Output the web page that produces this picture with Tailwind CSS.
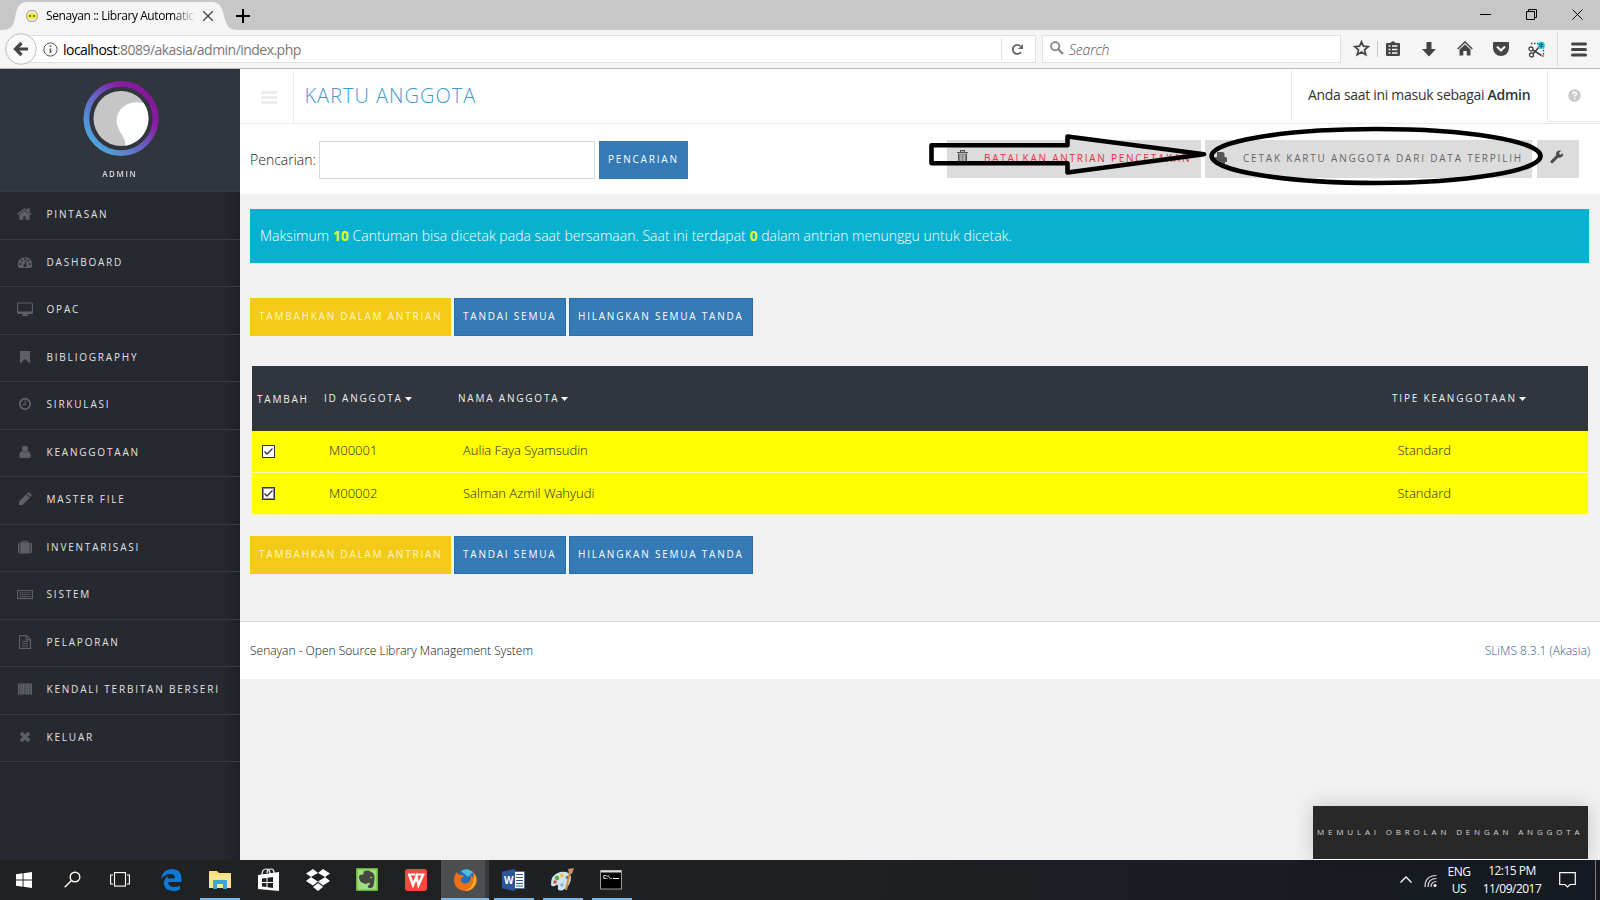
<!DOCTYPE html>
<html lang="id">
<head>
<meta charset="utf-8">
<title>Senayan :: Library Automation</title>
<script src="https://cdn.jsdelivr.net/npm/@tailwindcss/browser@4"></script>
</head>
<body class="w-[1600px] h-[900px] overflow-hidden relative flex flex-col bg-[#f1f1f1] font-['Open_Sans',sans-serif]">

<!-- Tab strip -->
<div class="h-[30px] shrink-0 bg-[#c7c7c7] flex relative">
  <svg class="absolute left-0 top-0" width="240" height="30"><path d="M0 30C11 30 13 27 15 18C17 7 19 2 28 2H211C220 2 222 7 224 16C227 27 229 30 238 30Z" fill="#f5f5f5"/></svg>
  <div class="relative flex items-center w-full">
    <svg class="ml-[26px] mt-[2px]" width="12" height="12" viewBox="0 0 12 12"><rect x=".5" y=".5" width="11" height="11" rx="4.500" fill="#e8e6d8" stroke="#a9a7b5"/><rect x="1" y="3.500" width="10" height="5" rx="2" fill="#f5ee20"/><circle cx="4" cy="6" r="1" fill="#554"/><circle cx="8" cy="6" r="1" fill="#554"/></svg>
    <span class="ml-[8px] mt-[2px] w-[150px] overflow-hidden whitespace-nowrap text-[12px] tracking-[-0.42px] bg-linear-to-r from-black from-84% to-transparent bg-clip-text text-transparent">Senayan :: Library Automatic</span>
    <svg class="ml-[7px] mt-[2px]" width="10" height="10" viewBox="0 0 10 10" stroke="#444" stroke-width="1.300"><path d="M0 0L10 10M10 0L0 10"/></svg>
    <svg class="ml-[23px] mt-[2px]" width="14" height="14" viewBox="0 0 14 14" stroke="#000" stroke-width="2"><path d="M7 0V14M0 7H14"/></svg>
    <svg class="ml-auto" width="11" height="11" viewBox="0 0 11 11" stroke="#000"><path d="M0 4.500H11"/></svg>
    <svg class="ml-[35px] -mt-[2px]" width="11" height="11" viewBox="0 0 11 11" fill="none" stroke="#000"><path d="M.5 2.500H8.500V10.500H.5ZM2.500 2.500V.5H10.500V8.500H8.500"/></svg>
    <svg class="ml-[35px] mr-[17px] -mt-[2px]" width="11" height="11" viewBox="0 0 11 11" stroke="#000"><path d="M.5 .5L10.500 10.500M10.500 .5L.5 10.500"/></svg>
  </div>
</div>

<!-- Address bar -->
<div class="h-[39px] shrink-0 bg-[#f5f5f5] border-b border-[#b9b9b9] flex items-center relative">
  <div class="ml-[21px] w-[1015px] h-[28px] bg-white border border-[#e0e0e0] flex items-center">
    <svg class="ml-[21px]" width="15" height="15" viewBox="0 0 15 15" fill="none" stroke="#555"><circle cx="7.500" cy="7.500" r="6.600"/><path d="M7.500 6.500V11M7.500 3.500V5" stroke-width="1.700"/></svg>
    <span class="ml-[5px] mt-[1px] text-[14px] text-black tracking-[-0.53px] whitespace-nowrap">localhost<span class="text-[#777]">:8089/akasia/admin/index.php</span></span>
    <div class="ml-auto w-[34px] h-[22px] border-l border-[#e0e0e0] flex items-center pl-[9px]">
      <svg width="13" height="13" viewBox="0 0 13 13"><path d="M10 9A4.500 4.500 0 1 1 9.500 3.200" fill="none" stroke="#666" stroke-width="1.900"/><path d="M7 6H12V1Z" fill="#666"/></svg>
    </div>
  </div>
  <svg class="absolute left-[5px] top-[3px]" width="32" height="32" viewBox="0 0 32 32"><circle cx="16" cy="16" r="15.300" fill="#f9f9f9" stroke="#bdbdbd"/><path d="M16.500 10L10.500 16L16.500 22M11 16H23" fill="none" stroke="#444" stroke-width="3.200"/></svg>
  <div class="ml-[6px] w-[299px] h-[28px] bg-white border border-[#e0e0e0] flex items-center">
    <svg class="ml-[7px] -mt-[2px]" width="14" height="14" viewBox="0 0 14 14" fill="none" stroke="#8a8a8a"><circle cx="5.200" cy="5.200" r="4.100" stroke-width="1.900"/><path d="M8.200 8.200L13 13" stroke-width="2.400"/></svg>
    <span class="ml-[5px] mt-[1px] text-[14px] italic font-light text-[#555] tracking-[-0.15px]">Search</span>
  </div>
  <svg class="ml-[12px] -mt-[2px]" width="17" height="17" viewBox="0 0 17 17"><path d="M8.500 1.800L10.400 6.200L15.200 6.600L11.500 9.800L12.700 14.600L8.500 12L4.300 14.600L5.500 9.800L1.800 6.600L6.600 6.200Z" fill="none" stroke="#444" stroke-width="1.700"/></svg>
  <div class="ml-[7px] w-px h-[16px] bg-[#c6c6c6]"></div>
  <svg class="ml-[8px] -mt-[2px]" width="14" height="15" viewBox="0 0 14 15"><path d="M0 3Q0 2 1 2H4L7 0L10 2H13Q14 2 14 3V13.500Q14 15 12.500 15H1.500Q0 15 0 13.500Z" fill="#444"/><path d="M2.500 5H4.500M2.500 8.500H4.500M2.500 12H4.500M6 5H11.500M6 8.500H11.500M6 12H11.500" stroke="#f5f5f5" stroke-width="1.700"/></svg>
  <svg class="ml-[22px]" width="14" height="15" viewBox="0 0 14 15"><path d="M4.500 0H9.500V7H14L7 14.500L0 7H4.500Z" fill="#444"/></svg>
  <svg class="ml-[21px] -mt-[1px]" width="16" height="15" viewBox="0 0 16 15"><path d="M.7 8L8 1L15.300 8" fill="none" stroke="#444" stroke-width="1.500"/><path d="M2.500 8.500L8 3.500L13.500 8.500V14.500H9.700V10H6.300V14.500H2.500Z" fill="#444"/></svg>
  <svg class="ml-[20px] -mt-[1px]" width="16" height="14" viewBox="0 0 16 14"><path d="M1 0H15Q16 0 16 1V6A8 8 0 0 1 0 6V1Q0 0 1 0Z" fill="#444"/><path d="M4 4.500L8 8.500L12 4.500" fill="none" stroke="#f5f5f5" stroke-width="2.200"/></svg>
  <svg class="ml-[19px]" width="18" height="17" viewBox="0 0 18 17" fill="none"><path d="M3 2.500H12M15.500 6V15H14" stroke="#444" stroke-width="1.300" stroke-dasharray="1.500 1.500"/><circle cx="3" cy="8" r="2" stroke="#444" stroke-width="1.300"/><circle cx="3.500" cy="14" r="2" stroke="#444" stroke-width="1.300"/><path d="M5 9L13.500 14.500M5 13L11 6" stroke="#444" stroke-width="1.600"/><circle cx="13.300" cy="4.300" r="3.600" fill="#12dbe6"/><path d="M13.300 1.800V6.800M11.100 3L15.500 5.600M15.500 3L11.100 5.600" stroke="#065a78" stroke-width="1.100"/></svg>
  <div class="ml-[11px] w-px h-[34px] bg-[#dadada]"></div>
  <svg class="ml-[13px]" width="16" height="15" viewBox="0 0 16 15" stroke="#444" stroke-width="3" stroke-linecap="round"><path d="M1.500 2H14.500M1.500 7.500H14.500M1.500 13H14.500"/></svg>
</div>

<!-- Page -->
<div class="h-[791px] shrink-0 flex">
  <aside class="w-[240px] shrink-0 bg-[#262930] bg-linear-to-l from-[#1f2128] to-[#262930] to-8% flex flex-col">
    <div class="h-[123px] shrink-0 bg-[#31353e] border-b border-[#363a43] flex flex-col items-center">
      <svg class="mt-[12px] ml-px" width="76" height="76" viewBox="0 0 76 76">
        <defs><linearGradient id="ring" x1="0.1" y1="0.85" x2="0.85" y2="0.15"><stop offset="0" stop-color="#4da5dc"/><stop offset=".5" stop-color="#6a5cc0"/><stop offset=".8" stop-color="#8a1fa5"/><stop offset="1" stop-color="#86179f"/></linearGradient><clipPath id="face"><circle cx="38" cy="37.500" r="27.500"/></clipPath></defs>
        <circle cx="38" cy="37.500" r="34.600" fill="none" stroke="url(#ring)" stroke-width="5.800"/>
        <g clip-path="url(#face)"><rect width="76" height="76" fill="#c6c6c6"/><path d="M70 28C58 16 37 21 34 36C32 45 38 51 40 56Q43 59 42 66H70Z" fill="#fff"/></g>
      </svg>
      <div class="mt-[10px] text-[9px] leading-[14px] font-semibold tracking-[1.8px] text-[#dcdcdc] origin-center scale-x-[0.89]">ADMIN</div>
    </div>
    <nav class="flex flex-col text-[10px] tracking-[1.8px] text-[#e2e2e2] [&>div]:h-[47.500px] [&>div]:border-b [&>div]:border-[#363a43] [&>div]:flex [&>div]:items-center [&>div]:pb-[1px] [&_svg]:w-[16px] [&_svg]:h-[16px] [&_svg]:ml-[17px] [&_svg]:mr-[13.5px] [&_svg]:mt-[-1px]">
      <div><svg viewBox="0 0 1792 1792" fill="#5d6067"><path d="M1408 992v480q0 26-19 45t-45 19h-384v-384h-256v384h-384q-26 0-45-19t-19-45v-480q0-1 .5-3t.5-3l575-474 575 474q1 2 1 6zm223-69l-62 74q-8 9-21 11h-3q-13 0-21-7l-692-577-692 577q-12 8-24 7-13-2-21-11l-62-74q-8-10-7-23.500t11-21.500l719-599q32-26 76-26t76 26l244 204v-195q0-14 9-23t23-9h192q14 0 23 9t9 23v408l219 182q10 8 11 21.500t-7 23.500z"/></svg>PINTASAN</div>
      <div><svg viewBox="0 0 16 16" fill="#5d6067"><path d="M1.800 14A7.200 7.200 0 1 1 14.200 14Z"/><g fill="#262930"><circle cx="3.300" cy="10" r="1"/><circle cx="4.800" cy="6.500" r="1"/><circle cx="8" cy="5" r="1"/><circle cx="11.300" cy="6.500" r="1"/><circle cx="12.700" cy="10" r="1"/><circle cx="8" cy="11.500" r="1.600"/><path d="M7.600 11L8.800 6.500L9.600 6.700L8.800 11.500Z"/></g></svg>DASHBOARD</div>
      <div><svg viewBox="0 0 16 16" fill="none" stroke="#5d6067"><rect x=".6" y="2" width="14.800" height="10.500" rx=".8" stroke-width="1.200"/><path d="M1 11.500H15" stroke-width="2"/><path d="M5 14.200H11M6.500 13H9.500" stroke-width="1.400"/></svg>OPAC</div>
      <div><svg viewBox="0 0 16 16" fill="#5d6067"><path d="M3 2H13V14.500L8 10L3 14.500Z"/></svg>BIBLIOGRAPHY</div>
      <div><svg viewBox="0 0 16 16" fill="none" stroke="#5d6067"><circle cx="8" cy="8" r="5.200" stroke-width="1.900"/><path d="M8.300 4.800V8.700H5.500" stroke-width="1.200"/></svg>SIRKULASI</div>
      <div><svg viewBox="0 0 16 16" fill="#5d6067"><circle cx="8" cy="4.800" r="3.100"/><path d="M4.800 7Q8 9.800 11.200 7Q13.700 8 13.700 12Q13.700 14 12 14H4Q2.300 14 2.300 12Q2.300 8 4.800 7Z"/></svg>KEANGGOTAAN</div>
      <div><svg viewBox="0 0 16 16" fill="#5d6067"><path d="M2 14V10.500L9.300 3.200L12.800 6.700L5.500 14ZM10 2.500L11.200 1.500Q12 1 12.700 1.700L14.200 3.200Q15 4 14.400 4.800L13.500 6Z"/></svg>MASTER FILE</div>
      <div><svg viewBox="0 0 16 16" fill="#5d6067"><path d="M1 5Q1 3.500 2.500 3.500V14.500Q1 14.500 1 13ZM3.300 3.500H5V2.500Q5 1.800 6 1.800H10Q11 1.800 11 2.500V3.500H12.700V14.500H3.300ZM6 3.500H10V2.800H6ZM13.500 3.500Q15 3.500 15 5V13Q15 14.500 13.500 14.500Z"/></svg>INVENTARISASI</div>
      <div><svg viewBox="0 0 16 16" fill="none" stroke="#5d6067"><rect x=".6" y="4.600" width="14.800" height="8" stroke-width="1.100"/><path d="M2.500 6.800H13.500M2.500 8.700H13.500" stroke-dasharray="1.500 .5"/><path d="M2.500 10.700H4M4.500 10.700H11.500M12 10.700H13.500"/></svg>SISTEM</div>
      <div><svg viewBox="0 0 16 16" fill="none" stroke="#5d6067"><path d="M2.500 1.600H9.500L13.500 5.600V14.400H2.500ZM9.300 1.600V5.800H13.500" stroke-width="1.200"/><path d="M5 7.500H11M5 9.700H11M5 11.900H11"/></svg>PELAPORAN</div>
      <div><svg viewBox="0 0 16 16" fill="#5d6067"><path d="M1 2.500H15V13.500H1Z" fill="#43464d"/><path d="M1 2.500H2.300V13.500H1ZM3 2.500H3.500V13.500H3ZM4.200 2.500H5.200V13.500H4.200ZM5.700 2.500H7V13.500H5.700ZM7.600 2.500H8.300V13.500H7.600ZM9 2.500H10.500V13.500H9ZM11 2.500H12V13.500H11ZM12.600 2.500H13.200V13.500H12.600ZM13.800 2.500H15V13.500H13.800Z"/></svg>KENDALI TERBITAN BERSERI</div>
      <div><svg viewBox="0 0 16 16" fill="none" stroke="#5d6067" stroke-width="3.600"><path d="M4 4L12 12M12 4L4 12"/></svg>KELUAR</div>
    </nav>
  </aside>

  <main class="flex-1 flex flex-col">
    <header class="h-[55px] shrink-0 bg-white border-b border-[#ececec] flex">
      <div class="w-[54px] mt-[3px] border-r border-[#ececec] flex pl-[21px] pt-[19px]">
        <svg width="16" height="13" viewBox="0 0 16 13" fill="#ededed"><path d="M0 0H16V3H0ZM0 5H16V8H0ZM0 10H16V13H0Z"/></svg>
      </div>
      <h1 class="ml-[10.5px] mt-[13px] text-[20px] leading-[28px] font-light tracking-[1px] text-[#3c9bcb]">KARTU ANGGOTA</h1>
      <div class="ml-auto w-[257px] h-[52px] border-x border-[#ececec] pl-[16px] pt-[15px] text-[14px] leading-[22px] text-[#333] whitespace-nowrap tracking-[-0.3px]">Anda saat ini masuk sebagai <b class="font-semibold">Admin</b></div>
      <div class="w-[52px] h-[53px] border-b border-[#ececec] flex items-center justify-center">
        <svg width="13" height="13" viewBox="0 0 13 13"><circle cx="6.500" cy="6.500" r="6.300" fill="#cacaca"/><path d="M4.500 5Q4.700 3.200 6.500 3.200Q8.500 3.200 8.500 5Q8.500 6.200 6.600 6.700V7.800M6.600 8.800V10.200" fill="none" stroke="#fff" stroke-width="1.500"/></svg>
      </div>
    </header>

    <section class="h-[70px] shrink-0 bg-white flex pt-[17px] pl-[10px]">
      <label class="w-[69px] text-[14px] leading-[20px] font-light text-[#222] pt-[9px]">Pencarian:</label>
      <div class="w-[276px] h-[38px] border border-[#d9d9d9]"></div>
      <div class="ml-[4px] w-[89px] h-[38px] bg-[#337ab7] text-white text-[10px] tracking-[1.8px] leading-[37px] pl-[9px]">PENCARIAN</div>
      <div class="ml-auto -mt-px w-[254px] h-[38px] bg-[#dcdcdc] flex items-center pl-[10px] pb-[2px] text-[10px] tracking-[1.75px] text-[#e8303a] whitespace-nowrap">
        <svg class="-mt-[4px] mr-[16px]" width="11" height="12" viewBox="0 0 11 12"><path d="M0 2.500H11M3.500 2V.6H7.500V2" fill="none" stroke="#555" stroke-width="1.100"/><path d="M1.500 3.500V11.500H9.500V3.500" fill="#888" stroke="#555"/><path d="M4 4.500V11M7 4.500V11" stroke="#ccc"/></svg>
        BATALKAN ANTRIAN PENCETAKAN
      </div>
      <div class="ml-[4px] -mt-px w-[327px] h-[38px] bg-[#dcdcdc] flex items-center pl-[9px] pb-[2px] text-[10px] tracking-[1.8px] text-[#666] whitespace-nowrap">
        <svg class="-mt-[1px] mr-[16px]" width="13" height="12" viewBox="0 0 13 12" fill="#555"><path d="M3 0H9L10.500 1.500V5H3ZM0 6.500Q0 5 1.500 5H11.500Q13 5 13 6.500V10H11V12H2V10H0Z"/></svg>
        CETAK KARTU ANGGOTA DARI DATA TERPILIH
      </div>
      <div class="ml-[5px] mr-[21px] -mt-px w-[42px] h-[38px] bg-[#dcdcdc] flex pt-[10px] pl-[13px]">
        <svg width="14" height="14" viewBox="0 0 14 14"><path d="M13 3.200L10.700 4.700L9.300 3.900V2.300L11.500.8Q8.500-.2 6.800 1.800Q5.700 3.300 6.300 5.200L.8 10.700Q0 11.600.8 12.600Q1.800 13.800 2.900 12.900L8.300 7.500Q10.800 8.200 12.300 6.600Q13.500 5.200 13 3.200Z" fill="#4c4c4c"/></svg>
      </div>
    </section>

    <section class="h-[427px] shrink-0 pl-[10px] pr-[11px] pt-[15px] flex flex-col">
      <div class="h-[54px] shrink-0 bg-[#08b1d0] pl-[10px] text-[14px] leading-[53px] font-light text-white tracking-[0.02px] whitespace-nowrap">Maksimum <b class="font-bold text-[#e4ff2a]">10</b> Cantuman bisa dicetak pada saat bersamaan. Saat ini terdapat <b class="font-bold text-[#e4ff2a]">0</b> dalam antrian menunggu untuk dicetak.</div>
      <div class="mt-[35px] flex gap-[3px] text-[10px] tracking-[1.78px] leading-[37px] text-white whitespace-nowrap">
        <div class="w-[201px] h-[38px] bg-[#f3ca18] pl-[9px] text-[#fff6c8]">TAMBAHKAN DALAM ANTRIAN</div>
        <div class="w-[112px] h-[38px] bg-[#337ab7] border border-[#2e6da4] pl-[8px] leading-[35px]">TANDAI SEMUA</div>
        <div class="w-[184px] h-[38px] bg-[#337ab7] border border-[#2e6da4] pl-[8px] leading-[35px]">HILANGKAN SEMUA TANDA</div>
      </div>
      <div class="mt-[30px] ml-[2px] w-[1336px] flex flex-col">
        <div class="h-[65px] bg-[#31353e] border-b border-[#3d3f1c] grid grid-cols-[67px_134px_934px_1fr] pl-[5px] pt-[22px] text-[10px] leading-[20px] tracking-[1.8px] text-[#f0f0f0] whitespace-nowrap">
          <div class="pt-[1px]">TAMBAH</div>
          <div class="flex">ID ANGGOTA<svg class="ml-[2px] mt-[9px]" width="7" height="4" viewBox="0 0 7 4"><path d="M0 0H7L3.500 4Z" fill="#fff"/></svg></div>
          <div class="flex">NAMA ANGGOTA<svg class="ml-[2px] mt-[9px]" width="7" height="4" viewBox="0 0 7 4"><path d="M0 0H7L3.500 4Z" fill="#fff"/></svg></div>
          <div class="flex">TIPE KEANGGOTAAN<svg class="ml-[2px] mt-[9px]" width="7" height="4" viewBox="0 0 7 4"><path d="M0 0H7L3.500 4Z" fill="#fff"/></svg></div>
        </div>
        <div class="h-[42px] bg-[#ffff00] border-b border-[#fbfba8] grid grid-cols-[67px_134px_934.5px_1fr] pl-[10px] pt-[9px] text-[13px] leading-[20px] font-light text-[#222]">
          <svg class="mt-[5px]" width="13" height="13" viewBox="0 0 13 13"><rect x=".5" y=".5" width="12" height="12" fill="#fff" stroke="#333"/><path d="M2.500 6.500L5 9L10.500 3.500" fill="none" stroke="#333" stroke-width="1.300"/></svg>
          <div>M00001</div><div>Aulia Faya Syamsudin</div><div>Standard</div>
        </div>
        <div class="h-[42px] bg-[#ffff00] border-b border-[#fbfba8] grid grid-cols-[67px_134px_934.5px_1fr] pl-[10px] pt-[10px] text-[13px] leading-[20px] font-light text-[#222]">
          <svg class="mt-[4px]" width="13" height="13" viewBox="0 0 13 13"><rect x=".5" y=".5" width="12" height="12" fill="#fff" stroke="#333"/><rect x="1.500" y="1.500" width="10" height="10" fill="none" stroke="#222" stroke-dasharray="1 1"/><path d="M2.500 6.500L5 9L10.500 3.500" fill="none" stroke="#333" stroke-width="1.300"/></svg>
          <div>M00002</div><div>Salman Azmil Wahyudi</div><div>Standard</div>
        </div>
      </div>
      <div class="mt-[21px] flex gap-[3px] text-[10px] tracking-[1.78px] leading-[37px] text-white whitespace-nowrap">
        <div class="w-[201px] h-[38px] bg-[#f3ca18] pl-[9px] text-[#fff6c8]">TAMBAHKAN DALAM ANTRIAN</div>
        <div class="w-[112px] h-[38px] bg-[#337ab7] border border-[#2e6da4] pl-[8px] leading-[35px]">TANDAI SEMUA</div>
        <div class="w-[184px] h-[38px] bg-[#337ab7] border border-[#2e6da4] pl-[8px] leading-[35px]">HILANGKAN SEMUA TANDA</div>
      </div>
    </section>

    <footer class="h-[58px] shrink-0 bg-white border-t border-[#d8d8d8] flex justify-between pl-[10px] pr-[10px] pt-[19px] text-[12px] leading-[20px] font-light text-[#111]">
      <span>Senayan - Open Source Library Management System</span>
      <span class="text-[#1f5f9b]">SLiMS 8.3.1 (Akasia)</span>
    </footer>
  </main>
</div>

<!-- Taskbar -->
<div class="h-[40px] shrink-0 bg-[#1e2022] bg-linear-to-r from-[#202224] via-[#1e2022] to-[#151a22] relative flex text-white">
  <div class="w-[48px] flex pl-[16px] pt-[12px]"><svg width="16" height="16" viewBox="0 0 17 17" fill="#fff"><path d="M0 2.400L7 1.400V8H0ZM8 1.200L17 0V8H8ZM0 9H7V15.600L0 14.600ZM8 9H17V17L8 15.800Z"/></svg></div>
  <div class="w-[48px] flex pl-[16px] pt-[11px]"><svg width="17" height="17" viewBox="0 0 17 17" fill="none" stroke="#fff" stroke-width="1.400"><circle cx="11" cy="6" r="4.800"/><path d="M7.500 9.500L.7 16.300"/></svg></div>
  <div class="w-[48px] flex pl-[14px] pt-[12px]"><svg width="20" height="15" viewBox="0 0 20 15" fill="none" stroke="#fff" stroke-width="1.100"><rect x="4.500" y=".6" width="11" height="13.500"/><path d="M3 3H.6V12H3M17 3H19.400V12H17"/></svg></div>
  <div class="w-[56px] flex pl-[17px] pt-[9px]"><svg width="21" height="22" viewBox="0 0 21 22"><path d="M0 10Q2 0 11 0Q20.500 0 20.500 10V13H7Q7.500 18 13 18Q16.500 18 19 16.500V20.500Q16 22 12 22Q3 21.500 2.800 14Q3 9 8 6.500Q6.500 8 6.500 9.500H14Q14 5 9.500 5Q4 5 0 10Z" fill="#0b7bd6"/></svg></div>
  <div class="w-[40px] border-b-2 border-[#76b9ed] flex pl-[9px] pt-[10px]"><svg width="22" height="20" viewBox="0 0 22 20"><path d="M0 1H8L10 3H22V18H0Z" fill="#f9dc7c"/><path d="M0 5H22V18H0Z" fill="#fbe595"/><path d="M4 19V11Q4 10 5 10H17Q18 10 18 11V19H14V14H8V19Z" fill="#3ea3d8"/></svg></div>
  <div class="w-[50px] flex pl-[18px] pt-[8px]"><svg width="22" height="24" viewBox="0 0 22 24"><path d="M0 7L21 4V23L0 21Z" fill="#fff"/><path d="M4 7Q4 1 8 1Q12 1 12 6M9 5Q9 1 13 1Q16 1 16 5" fill="none" stroke="#fff" stroke-width="1.200"/><path d="M4 10.500L8.500 10V14H4ZM9.500 9.800L15 9V14H9.500ZM4 15H8.500V19L4 18.500ZM9.500 15H15V20L9.500 19.200Z" fill="#1e2022"/></svg></div>
  <div class="w-[50px] flex pl-[16px] pt-[9px]"><svg width="24" height="22" viewBox="0 0 24 22" fill="#fff"><path d="M7 0L12 4L5 8L0 4.500ZM17 0L24 4.500L19 8L12 4ZM5 8L12 12.500L7 16.500L0 12ZM19 8L24 12L17 16.500L12 12.500ZM12 14L17 18L12 22L7 18Z"/><path d="M12 4.500L18.500 8.200L12 12L5.500 8.200Z" fill="#1e2022"/></svg></div>
  <div class="w-[50px] flex pl-[16px] pt-[8px]"><svg width="22" height="23" viewBox="0 0 22 23"><rect width="22" height="23" rx="1" fill="#64b83c"/><rect x="1.500" y="1.500" width="19" height="20" fill="#a5dc80"/><path d="M3 8Q4 6 7.500 6.500V3.500Q12 1.500 15 4Q18 4.500 18.500 9Q18.500 15 17 19Q15 21 12 19.500Q11 17 14 16.500Q13.500 13.500 11 15.500Q10 16.500 7 15Q3 14 3 8Z" fill="#46483f"/><path d="M14 10Q15 8.500 16.300 10" stroke="#a5dc80" fill="none"/></svg></div>
  <div class="w-[51px] flex pl-[15px] pt-[9px]"><svg width="22" height="22" viewBox="0 0 22 22"><rect width="22" height="22" rx="3" fill="#f5483f"/><path d="M3 5.500H10.500M11.500 5.500H19.500" stroke="#fff" stroke-width="1.800"/><path d="M4 5L8 16L11.500 7.500L13.500 16L18.300 5" fill="none" stroke="#fff" stroke-width="2.500"/></svg></div>
  <div class="w-[48px] border-b-2 border-[#76b9ed] bg-linear-to-r from-[#4c4e50] from-92% to-[#37393b] to-92% flex pl-[13px] pt-[9px]"><svg width="23" height="22" viewBox="0 0 23 22"><circle cx="12" cy="10" r="9.800" fill="#1f6fb8"/><path d="M7 2Q13-2 19 3L14 8Z" fill="#50bce0"/><path d="M18 2Q23 6 23 12Q21 22 11 22Q1 21 0 12Q0 6 3 3L4.500 6Q8 5 10 7L8 9Q6 10 7.500 13Q11 16 15 13Q18 10 16 6Q18.500 7 19.500 9Q20 5 18 2Z" fill="#ee7118"/><path d="M20.500 5Q24 12 19.500 18Q15 22 11 22Q18 19 19.500 13Z" fill="#f9b825"/></svg></div>
  <div class="ml-[5px] w-[40px] border-b-2 border-[#76b9ed] flex pl-[8px] pt-[9px]"><svg width="23" height="22" viewBox="0 0 23 22"><rect x="11" y="2.500" width="11.500" height="17" fill="#fff" stroke="#2b5797" stroke-width=".6"/><path d="M14 5.500H21M14 8.500H21M14 11.500H21M14 14.500H21M14 17H21" stroke="#2b5797"/><path d="M0 2.500L13 0V22L0 19.500Z" fill="#2b5797"/><text x="2" y="15" font-size="11" font-weight="700" font-family="Open Sans" fill="#fff" textLength="9.500" lengthAdjust="spacingAndGlyphs">W</text></svg></div>
  <div class="ml-[9px] w-[40px] border-b-2 border-[#76b9ed] flex pl-[7px] pt-[8px]"><svg width="24" height="24" viewBox="0 0 24 24"><path d="M1 17Q0 7 10 4Q20 3 21 9Q21 18 13 22Q7 24 8 19Q8 15 5 18Q2 19 1 17Z" fill="#cfe0ee"/><circle cx="7" cy="10" r="2.200" fill="#59a945"/><circle cx="12" cy="7.500" r="2" fill="#f0c33c"/><circle cx="5" cy="14" r="1.800" fill="#de4b3a"/><circle cx="17.500" cy="9.500" r="1.800" fill="#3d7fd0"/><circle cx="12" cy="17" r="1.800" fill="#7fb6e3"/><path d="M20 4L16 22" stroke="#d88b35" stroke-width="2"/><path d="M18 1L24 0L22 6L19 5Z" fill="#c3936b"/></svg></div>
  <div class="ml-[9px] w-[40px] border-b-2 border-[#76b9ed] flex pl-[8px] pt-[10px]"><svg width="22" height="20" viewBox="0 0 22 20"><rect x=".5" y=".5" width="21" height="18.500" fill="#000" stroke="#999"/><path d="M1 1.500H21" stroke="#ddd" stroke-width="2"/><text x="3" y="9" font-size="6" font-weight="700" font-family="Liberation Mono" fill="#fff" textLength="10">C:\.</text><path d="M13 8.500H19" stroke="#fff"/></svg></div>

  <svg class="ml-auto mt-[16px]" width="12" height="7" viewBox="0 0 12 7" fill="none" stroke="#fff" stroke-width="1.300"><path d="M.5 6.500L6 1L11.500 6.500"/></svg>
  <svg class="ml-[12px] mt-[14px]" width="13" height="14" viewBox="0 0 13 14" fill="none" stroke="#ddd" stroke-width="1.200"><path d="M1 13Q1 1.500 12.500 1.500M4 13Q4 4.500 12.500 4.500M7 13Q7 7.500 12.500 7.500"/><circle cx="11" cy="11.500" r="1.600" fill="#fff" stroke="none"/></svg>
  <div class="ml-[8px] w-[28px] mt-[3px] text-center text-[12px] leading-[17px] tracking-[-0.5px]">ENG<br>US</div>
  <div class="ml-[7px] w-[64px] mt-[2px] text-center text-[12px] leading-[18px] tracking-[-0.5px] whitespace-nowrap">12:15 PM<br>11/09/2017</div>
  <svg class="ml-[15px] mt-[12px]" width="17" height="17" viewBox="0 0 17 17" fill="none" stroke="#fff" stroke-width="1.200"><path d="M.7 .7H16.300V12.500H11L8.500 15L6 12.500H.7Z"/></svg>
  <div class="ml-[19px] mr-[4px] w-px bg-[#7b7d80]"></div>
</div>

<!-- Chat launcher -->
<div class="absolute left-[1313px] top-[806px] w-[275px] h-[53px] bg-[#282828] shadow-[0_0_20px_rgba(0,0,0,0.18)] pl-[4px] text-[8px] leading-[52px] tracking-[3.82px] text-[#d5d5d5] whitespace-nowrap">MEMULAI OBROLAN DENGAN ANGGOTA</div>
<div class="absolute left-[1313px] top-[859px] w-[275px] h-px bg-white"></div>

<!-- Hand-drawn arrow and ellipse -->
<svg class="absolute left-[920px] top-[120px]" width="640" height="72" viewBox="920 120 640 72" fill="none" stroke="#000" stroke-width="4.600">
  <path d="M931.500 145.300H1067.500V136.500L1204 154.300L1067.500 172.500V163.300H931.500Z" stroke-linejoin="round"/>
  <ellipse cx="1376" cy="156" rx="164.500" ry="27"/>
</svg>
</body>
</html>
